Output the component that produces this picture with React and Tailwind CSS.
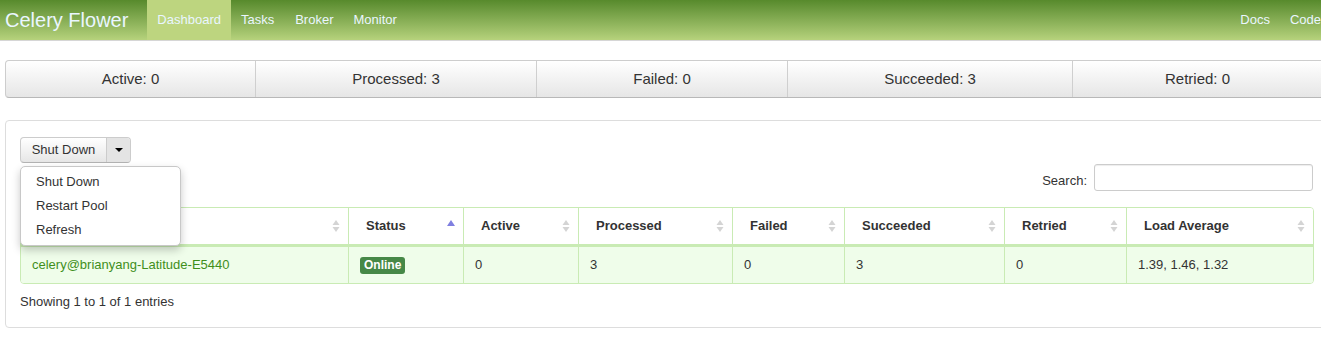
import React from "react";

function SortBoth() {
  return (
    <svg width="8" height="14" viewBox="0 0 8 14" className="shrink-0">
      <path d="M4 1 L7.5 6 L0.5 6 Z" fill="#d4d4d4" />
      <path d="M4 13 L7.5 8 L0.5 8 Z" fill="#d4d4d4" />
    </svg>
  );
}

function SortAsc() {
  return (
    <svg width="8" height="14" viewBox="0 0 8 14" className="shrink-0">
      <path d="M4 1 L8 7 L0 7 Z" fill="#7f7fe0" />
    </svg>
  );
}

const cols = [
  { name: "", w: "w-[327px]", sort: "both" },
  { name: "Status", w: "w-[115px]", sort: "asc" },
  { name: "Active", w: "w-[115px]", sort: "both" },
  { name: "Processed", w: "w-[154px]", sort: "both" },
  { name: "Failed", w: "w-[112px]", sort: "both" },
  { name: "Succeeded", w: "w-[160px]", sort: "both" },
  { name: "Retried", w: "w-[122px]", sort: "both" },
  { name: "Load Average", w: "w-[187px]", sort: "both" },
];

const stats = [
  { label: "Active: 0", w: "w-[249px]" },
  { label: "Processed: 3", w: "w-[281px]" },
  { label: "Failed: 0", w: "w-[251px]" },
  { label: "Succeeded: 3", w: "w-[285px]" },
  { label: "Retried: 0", w: "w-[250px]" },
];

export default function App() {
  return (
    <div
      className="w-full h-[361px] overflow-hidden bg-white text-[13px] text-[#333]"
      style={{ fontFamily: '"Liberation Sans", Arial, sans-serif' }}
    >
      <div className="w-[1345px]">
        {/* Navbar */}
        <div className="h-[41px] bg-gradient-to-b from-[#578a2c] to-[#b6d27c] border-b border-[#d6d6d6] flex items-stretch">
          <div className="pl-[5px] pr-[19px] flex items-center text-[20px] text-[#eaf6ff] leading-[40px]">
            Celery Flower
          </div>
          <div className="flex items-stretch">
            <div className="px-[10px] flex items-center bg-[#bdd57f] text-[#eaf6ff]">Dashboard</div>
            <div className="px-[10px] flex items-center text-[#eaf6ff]">Tasks</div>
            <div className="pl-[11px] pr-[10px] flex items-center text-[#eaf6ff]">Broker</div>
            <div className="px-[10px] flex items-center text-[#eaf6ff]">Monitor</div>
          </div>
          <div className="ml-auto flex items-stretch pr-[14px]">
            <div className="px-[10px] flex items-center text-[#eaf6ff]">Docs</div>
            <div className="px-[10px] flex items-center text-[#eaf6ff]">Code</div>
          </div>
        </div>

        {/* Stats bar */}
        <div className="mt-[19px] ml-[5px] flex h-[38px] rounded-[4px] border border-[#cdcdcd] border-b-[#b8b8b8] bg-gradient-to-b from-white to-[#e6e6e6] text-[15px] text-[#333] overflow-hidden w-[1330px]">
          {stats.map((s, i) => (
            <div
              key={s.label}
              className={`${s.w} shrink-0 flex items-center justify-center ${i > 0 ? "border-l border-[#cfcfcf]" : ""}`}
            >
              {s.label}
            </div>
          ))}
        </div>

        {/* Panel */}
        <div className="mt-[22px] ml-[5px] w-[1325px] h-[208px] border border-[#dddddd] rounded-[4px] pl-[14px] pt-[16px] relative">
          {/* Button group */}
          <div className="flex h-[26px] w-[111px] rounded-[4px] border border-[#cccccc] border-b-[#b3b3b3] bg-gradient-to-b from-white to-[#e6e6e6] overflow-hidden">
            <div className="w-[85px] flex items-center justify-center text-[13px] text-[#333]">Shut Down</div>
            <div className="flex-1 border-l border-[#cccccc] bg-[#e4e4e4] flex items-center justify-center">
              <svg width="8" height="4" viewBox="0 0 8 4">
                <path d="M0 0 L8 0 L4 4 Z" fill="#000" />
              </svg>
            </div>
          </div>

          {/* Dropdown menu */}
          <div className="absolute left-[14px] top-[45px] w-[161px] z-10 bg-white rounded-[5px] border border-[#c8c8c8] shadow-[0_4px_8px_rgba(0,0,0,0.22)] py-[3px]">
            {["Shut Down", "Restart Pool", "Refresh"].map((t) => (
              <div key={t} className="px-[15px] py-[3px] leading-[18px] text-[#333]">
                {t}
              </div>
            ))}
          </div>

          {/* Search */}
          <div className="flex justify-end items-center pr-[16px] mt-[1px]">
            <span className="mr-[7px] mt-[7px] text-[#333]">Search:</span>
            <div className="w-[219px] h-[27px] border border-[#cccccc] rounded-[3px] bg-white shadow-[inset_0_1px_1px_rgba(0,0,0,0.075)]" />
          </div>

          {/* Table */}
          <div className="mt-[16px] w-[1294px] border border-[#c9ebb4] rounded-[4px] overflow-hidden">
            <div className="flex h-[39px] border-b-[3px] border-[#c9ebb4] bg-white">
              {cols.map((c, i) => (
                <div
                  key={i}
                  className={`${c.w} shrink-0 flex items-center justify-between pl-[17px] pr-[8px] font-bold text-[#333] ${i > 0 ? "border-l border-[#c9ebb4]" : ""}`}
                >
                  <span>{c.name}</span>
                  {c.sort === "asc" ? <SortAsc /> : <SortBoth />}
                </div>
              ))}
            </div>
            <div className="flex h-[36px] bg-[#effdea]">
              {[
                <span key="h" className="text-[#3f8f1c]">celery@brianyang-Latitude-E5440</span>,
                <span
                  key="s"
                  className="bg-[#468847] text-white font-bold text-[12px] leading-[16px] px-[4px] rounded-[3px] pb-[1px]"
                >
                  Online
                </span>,
                "0",
                "3",
                "0",
                "3",
                "0",
                "1.39, 1.46, 1.32",
              ].map((v, i) => (
                <div
                  key={i}
                  className={`${cols[i].w} shrink-0 flex items-center pl-[11px] text-[#333] ${i > 0 ? "border-l border-[#c9ebb4]" : ""}`}
                >
                  {v}
                </div>
              ))}
            </div>
          </div>

          <div className="mt-[8px] text-[#333]">Showing 1 to 1 of 1 entries</div>
        </div>
      </div>
    </div>
  );
}
